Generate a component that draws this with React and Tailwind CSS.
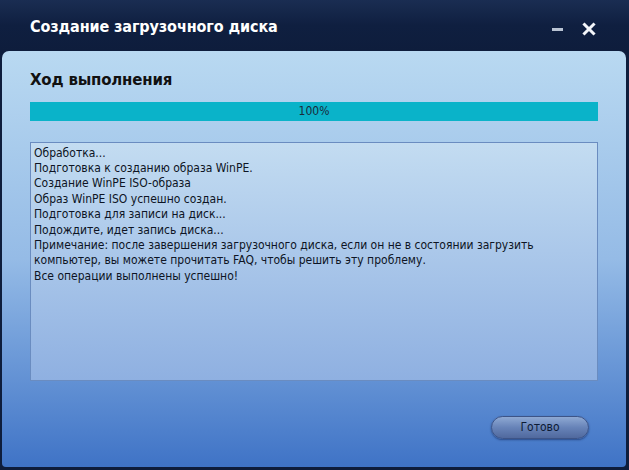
import React from "react";

const lines = [
  "Обработка...",
  "Подготовка к созданию образа WinPE.",
  "Создание WinPE ISO-образа",
  "Образ WinPE ISO успешно создан.",
  "Подготовка для записи на диск...",
  "Подождите, идет запись диска...",
  "Примечание: после завершения загрузочного диска, если он не в состоянии загрузить",
  "компьютер, вы можете прочитать FAQ, чтобы решить эту проблему.",
  "Все операции выполнены успешно!",
];

export default function App() {
  return (
    <div className="w-[629px] h-[470px] bg-[#0e1d3c] flex flex-col overflow-hidden font-['DejaVu_Sans',sans-serif]">
      <div className="h-[51px] flex items-center pl-[30px] pr-[33px] bg-gradient-to-b from-[#1a2d52] via-[#0f1f40] to-[#0e1d3c]">
        <div className="text-white text-[16px] font-bold font-['DejaVu_Sans_Condensed','DejaVu_Sans',sans-serif] tracking-[-0.1px] pt-[2px]">
          Создание загрузочного диска
        </div>
        <div className="ml-auto flex items-center gap-[19px]">
          <div className="w-[11px] h-[3px] bg-[#b9c3d3] mt-[8px]" />
          <svg width="14" height="14" viewBox="0 0 14 14" className="mt-[6px]">
            <path d="M2.5 2.5 L11.5 11.5 M11.5 2.5 L2.5 11.5" stroke="#f4f6fa" strokeWidth="3" strokeLinecap="square" />
          </svg>
        </div>
      </div>
      <div className="ml-[2px] mr-[3px] mb-[3px] flex-1 rounded-t-[7px] rounded-b-[4px] bg-gradient-to-b from-[#b9d9f1] via-[#95bbe6] to-[#3f73c6] flex flex-col px-[28px]">
        <div className="mt-[18px] text-[15px] font-bold text-[#111] font-['DejaVu_Sans',sans-serif] tracking-[-0.2px]">
          Ход выполнения
        </div>
        <div className="mt-[10px] h-[19px] bg-[#0ab3c9] flex items-center justify-center text-[12px] text-[#1a2a3a] font-['DejaVu_Sans_Condensed','DejaVu_Sans',sans-serif]">
          100%
        </div>
        <div className="mt-[21px] h-[239px] border border-[#6a8cc0] bg-gradient-to-b from-[#c3dcf1] to-[#8fb0e1] px-[3px] pt-[3px] text-[12px] leading-[15.4px] text-[#0d1424] font-['DejaVu_Sans_Condensed','DejaVu_Sans',sans-serif]">
          {lines.map((l, i) => (
            <div key={i}>{l}</div>
          ))}
        </div>
        <div className="flex justify-end mt-[35px] pr-[9px]">
          <button className="w-[98px] h-[23px] rounded-full bg-gradient-to-b from-[#8fa9d3] via-[#6783b8] to-[#50699e] border border-[#3d5487] shadow-[0_1px_2px_rgba(20,40,90,0.6)] text-[12px] text-[#0d1a33] font-['DejaVu_Sans_Condensed','DejaVu_Sans',sans-serif]">
            Готово
          </button>
        </div>
      </div>
    </div>
  );
}
